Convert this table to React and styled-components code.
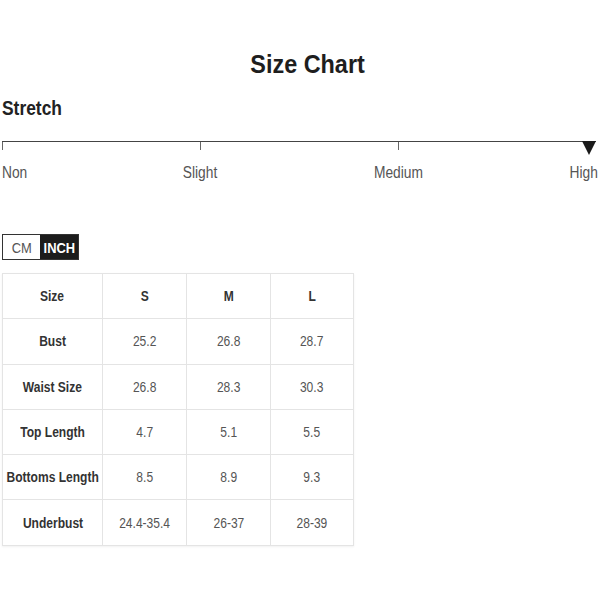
import React, { useState } from 'react';
import styled, { createGlobalStyle } from 'styled-components';

const Global = createGlobalStyle`
  body {
    margin: 0;
    background: #fff;
    font-family: "Liberation Sans", Arial, sans-serif;
    color: #222;
  }
`;

// the reference type is a narrow grotesque; squeeze Liberation Sans to match
const Narrow = styled.span`
  display: inline-block;
  white-space: nowrap;
  transform: scaleX(${p => p.k || 0.86});
  transform-origin: ${p => p.origin || 'center'};
  margin: 0 ${p => (p.origin ? '0' : '-12px')};
`;

const Page = styled.div`
  width: 600px;
  height: 600px;
  box-sizing: border-box;
  padding: 48px 2px 0 2px;
`;

const Title = styled.h1`
  margin: 0;
  text-align: center;
  font-size: 26px;
  font-weight: bold;
  line-height: 32px;
  padding-left: 15px;
  color: #1e1e1e;
`;

const Section = styled.h2`
  margin: 16px 0 0;
  font-size: 20px;
  font-weight: bold;
  line-height: 24px;
  color: #222;
`;

const Scale = styled.div`
  position: relative;
  margin-top: 21px;
  width: 594px;
  height: 10px;
  border-top: 1.5px solid #444;
`;

const Tick = styled.span`
  position: absolute;
  top: 0;
  left: ${p => p.at}px;
  width: 1px;
  height: 8px;
  background: #666;
`;

const Marker = styled.span`
  position: absolute;
  top: -1px;
  right: 0;
  width: 0;
  height: 0;
  border-left: 7px solid transparent;
  border-right: 7px solid transparent;
  border-top: 14px solid #1a1a1a;
`;

const Labels = styled.div`
  display: grid;
  grid-template-columns: 100px 196px 200px 1fr;
  margin-top: 11px;
  font-size: 16px;
  line-height: 20px;
  color: #555;
`;

const Label = styled.span`
  text-align: ${p => p.align || 'center'};
`;

const Toggle = styled.div`
  display: inline-flex;
  margin-top: 51px;
  border: 1px solid #333;
`;

const Unit = styled.button`
  border: none;
  margin: 0;
  height: 24px;
  width: ${p => p.w}px;
  padding: 0;
  font-family: inherit;
  font-size: 15px;
  font-weight: ${p => (p.active ? 'bold' : 'normal')};
  background: ${p => (p.active ? '#1c1c1c' : '#fff')};
  color: ${p => (p.active ? '#fff' : '#555')};
  cursor: pointer;
`;

const Table = styled.table`
  margin-top: 13px;
  width: 347px;
  table-layout: fixed;
  border-collapse: collapse;
  font-size: 14px;
  color: #444;
  box-shadow: 0 1px 2px rgba(0, 0, 0, 0.06);
`;

const Cell = styled.td`
  border: 1px solid #e4e4e4;
  height: 44.3px;
  padding: 0;
  text-align: center;
  width: ${p => p.w}px;
  font-weight: ${p => (p.head ? 'bold' : 'normal')};
  color: ${p => (p.head ? '#333' : '#555')};
`;

const sizes = ['S', 'M', 'L'];
const widths = [99, 83, 83, 82];
const rows = [
  ['Bust', '25.2', '26.8', '28.7'],
  ['Waist Size', '26.8', '28.3', '30.3'],
  ['Top Length', '4.7', '5.1', '5.5'],
  ['Bottoms Length', '8.5', '8.9', '9.3'],
  ['Underbust', '24.4-35.4', '26-37', '28-39'],
];

export default function App() {
  const [unit, setUnit] = useState('inch');
  return (
    <>
      <Global />
      <Page>
        <Title><Narrow k={0.9}>Size Chart</Narrow></Title>
        <Section><Narrow k={0.87} origin="left">Stretch</Narrow></Section>
        <Scale>
          <Tick at={0} />
          <Tick at={198} />
          <Tick at={396} />
          <Marker />
        </Scale>
        <Labels>
          <Label align="left"><Narrow origin="left">Non</Narrow></Label>
          <Label><Narrow>Slight</Narrow></Label>
          <Label><Narrow>Medium</Narrow></Label>
          <Label align="right"><Narrow origin="right">High</Narrow></Label>
        </Labels>
        <Toggle>
          <Unit w={37} active={unit === 'cm'} onClick={() => setUnit('cm')}>
            <Narrow>CM</Narrow>
          </Unit>
          <Unit w={38} active={unit === 'inch'} onClick={() => setUnit('inch')}>
            <Narrow>INCH</Narrow>
          </Unit>
        </Toggle>
        <Table>
          <tbody>
            <tr>
              <Cell head w={widths[0]}><Narrow>Size</Narrow></Cell>
              {sizes.map((s, i) => (
                <Cell head key={s} w={widths[i + 1]}><Narrow>{s}</Narrow></Cell>
              ))}
            </tr>
            {rows.map(r => (
              <tr key={r[0]}>
                {r.map((v, i) => (
                  <Cell key={i} head={i === 0} w={widths[i]}><Narrow>{v}</Narrow></Cell>
                ))}
              </tr>
            ))}
          </tbody>
        </Table>
      </Page>
    </>
  );
}
